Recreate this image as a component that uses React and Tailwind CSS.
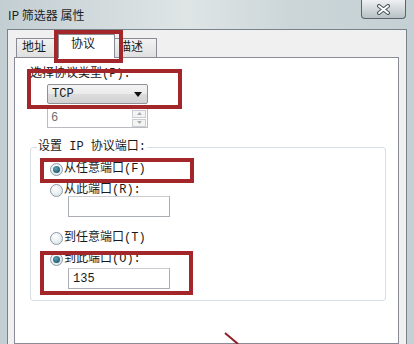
import React from 'react';

const body = "font-['Liberation_Mono','Noto_Sans_CJK_SC',monospace] text-[12px] leading-[14px] text-[#1a1a1a]";

function Radio({ checked }) {
  return (
    <span className="w-[13px] h-[13px] shrink-0 rounded-full border border-[#8d9ca4] bg-[radial-gradient(circle_at_40%_35%,#ffffff,#d3e0e7)] flex items-center justify-center">
      {checked && (
        <span className="w-[7px] h-[7px] rounded-full bg-[radial-gradient(circle_at_40%_35%,#5aa7c0,#123e4e)]" />
      )}
    </span>
  );
}

function TextBox({ value, className = '' }) {
  return (
    <div className={`h-[21px] w-[102px] border border-[#a9aeb4] border-t-[#c9cdd2] bg-white flex items-center pl-[4px] ${className}`}>
      {value}
    </div>
  );
}

function RedBox({ className }) {
  return <div className={`absolute border-[4px] border-[#a3262a] pointer-events-none ${className}`} />;
}

export default function App() {
  return (
    <div className="w-[414px] h-[344px] overflow-hidden relative flex flex-col bg-[linear-gradient(90deg,#c3ced3,#dfe5e5_45%,#ccd6d9_70%,#c4d0d4)]">
      {/* title bar */}
      <div className="h-[29px] shrink-0 flex items-start justify-between">
        <div className="pl-[8px] pt-[8px] font-['Noto_Sans_CJK_SC',sans-serif] text-[12px] leading-[14px] text-[#1e1e1e]">
          IP 筛选器 属性
        </div>
        <div className="mr-[8px] w-[45px] h-[19px] border border-t-0 border-[#58636a] rounded-b-[4px] bg-[linear-gradient(180deg,#eef0f1,#d2d8db_50%,#b9c1c5)] flex items-center justify-center">
          <svg width="15" height="11" viewBox="0 0 15 11">
            <path d="M3 2 L12 9 M12 2 L3 9" stroke="#4a5358" strokeWidth="4" strokeLinecap="round" />
            <path d="M3 2 L12 9 M12 2 L3 9" stroke="#ffffff" strokeWidth="2" strokeLinecap="round" />
          </svg>
        </div>
      </div>

      {/* window body */}
      <div className="flex-1 min-h-0 flex pl-[7px] pr-[7px]">
        <div className={`w-[400px] border-l border-r border-t border-[#76838a] bg-[#f0f0f0] pl-[6px] flex flex-col ${body}`}>
          {/* tabs */}
          <div className="pt-[4px] flex items-end h-[27px] shrink-0">
            <div className="ml-[2px] w-[44px] h-[19px] border border-b-0 border-[#898c95] bg-[linear-gradient(180deg,#f2f2f2,#e0e0e0)] flex items-center pl-[5px]">
              地址
            </div>
            <div className="relative z-10 -mx-[2px] mb-[-1px] w-[57px] h-[24px] border border-b-0 border-[#898c95] bg-white pl-[12px] pt-[3px]">
              协议
            </div>
            <div className="w-[44px] h-[19px] border border-b-0 border-[#898c95] bg-[linear-gradient(180deg,#f2f2f2,#e0e0e0)] flex items-center pl-[5px]">
              描述
            </div>
          </div>

          {/* panel */}
          <div className="w-[385px] flex-1 border border-[#898c95] bg-white flex flex-col">
            <div className="pl-[15px] pt-[9px]">选择协议类型(P):</div>
            <div className="ml-[32px] mt-[3px] w-[101px] h-[20px] border border-[#8e9296] rounded-[2px] bg-[linear-gradient(180deg,#f4f4f4,#ebebeb_48%,#dcdcdc_52%,#d2d2d2)] flex items-center justify-between pl-[4px] pr-[5px]">
              <span>TCP</span>
              <svg width="8" height="5" viewBox="0 0 8 5">
                <path d="M0 0 H8 L4 5 Z" fill="#111" />
              </svg>
            </div>
            <div className="ml-[32px] mt-[4px] w-[101px] h-[20px] border border-[#b9bdc2] bg-white flex items-center justify-between pl-[3px] pr-[1px] text-[#6d6d6d]">
              <span>6</span>
              <div className="flex flex-col gap-[1px]">
                <div className="w-[14px] h-[8px] border border-[#c9ccd0] bg-[#f4f4f4] flex items-center justify-center">
                  <svg width="5" height="3" viewBox="0 0 5 3"><path d="M0 3 H5 L2.5 0 Z" fill="#a8acb0" /></svg>
                </div>
                <div className="w-[14px] h-[8px] border border-[#c9ccd0] bg-[#f4f4f4] flex items-center justify-center">
                  <svg width="5" height="3" viewBox="0 0 5 3"><path d="M0 0 H5 L2.5 3 Z" fill="#a8acb0" /></svg>
                </div>
              </div>
            </div>

            <fieldset className="mt-[12px] ml-[15px] w-[356px] border border-[#d5dfe5] rounded-[3px] pb-[11px]">
              <legend className="ml-[6px] px-[1px]">设置 IP 协议端口:</legend>
              <div className="mt-[8px] h-[14px] flex items-center pl-[19px]">
                <Radio checked />
                <span className="ml-[1px]">从任意端口(F)</span>
              </div>
              <div className="mt-[7px] h-[14px] flex items-center pl-[19px]">
                <Radio />
                <span className="ml-[1px]">从此端口(R):</span>
              </div>
              <TextBox className="ml-[37px] -mt-[1px]" value="" />
              <div className="mt-[14px] h-[14px] flex items-center pl-[19px]">
                <Radio />
                <span className="ml-[1px]">到任意端口(T)</span>
              </div>
              <div className="mt-[7px] h-[14px] flex items-center pl-[19px]">
                <Radio checked />
                <span className="ml-[1px]">到此端口(O):</span>
              </div>
              <TextBox className="ml-[37px] mt-[2px]" value="135" />
            </fieldset>
          </div>
        </div>
      </div>

      {/* red highlight marks */}
      <RedBox className="left-[54px] top-[30px] w-[69px] h-[33px]" />
      <RedBox className="left-[27px] top-[69px] w-[155px] h-[40px]" />
      <RedBox className="left-[40px] top-[158px] w-[154px] h-[25px]" />
      <RedBox className="left-[40px] top-[251px] w-[153px] h-[44px]" />
      <svg className="absolute left-[222px] top-[330px]" width="20" height="14" viewBox="0 0 20 14">
        <path d="M3 3 L16 14" stroke="#8e1f24" strokeWidth="2" />
      </svg>
    </div>
  );
}
